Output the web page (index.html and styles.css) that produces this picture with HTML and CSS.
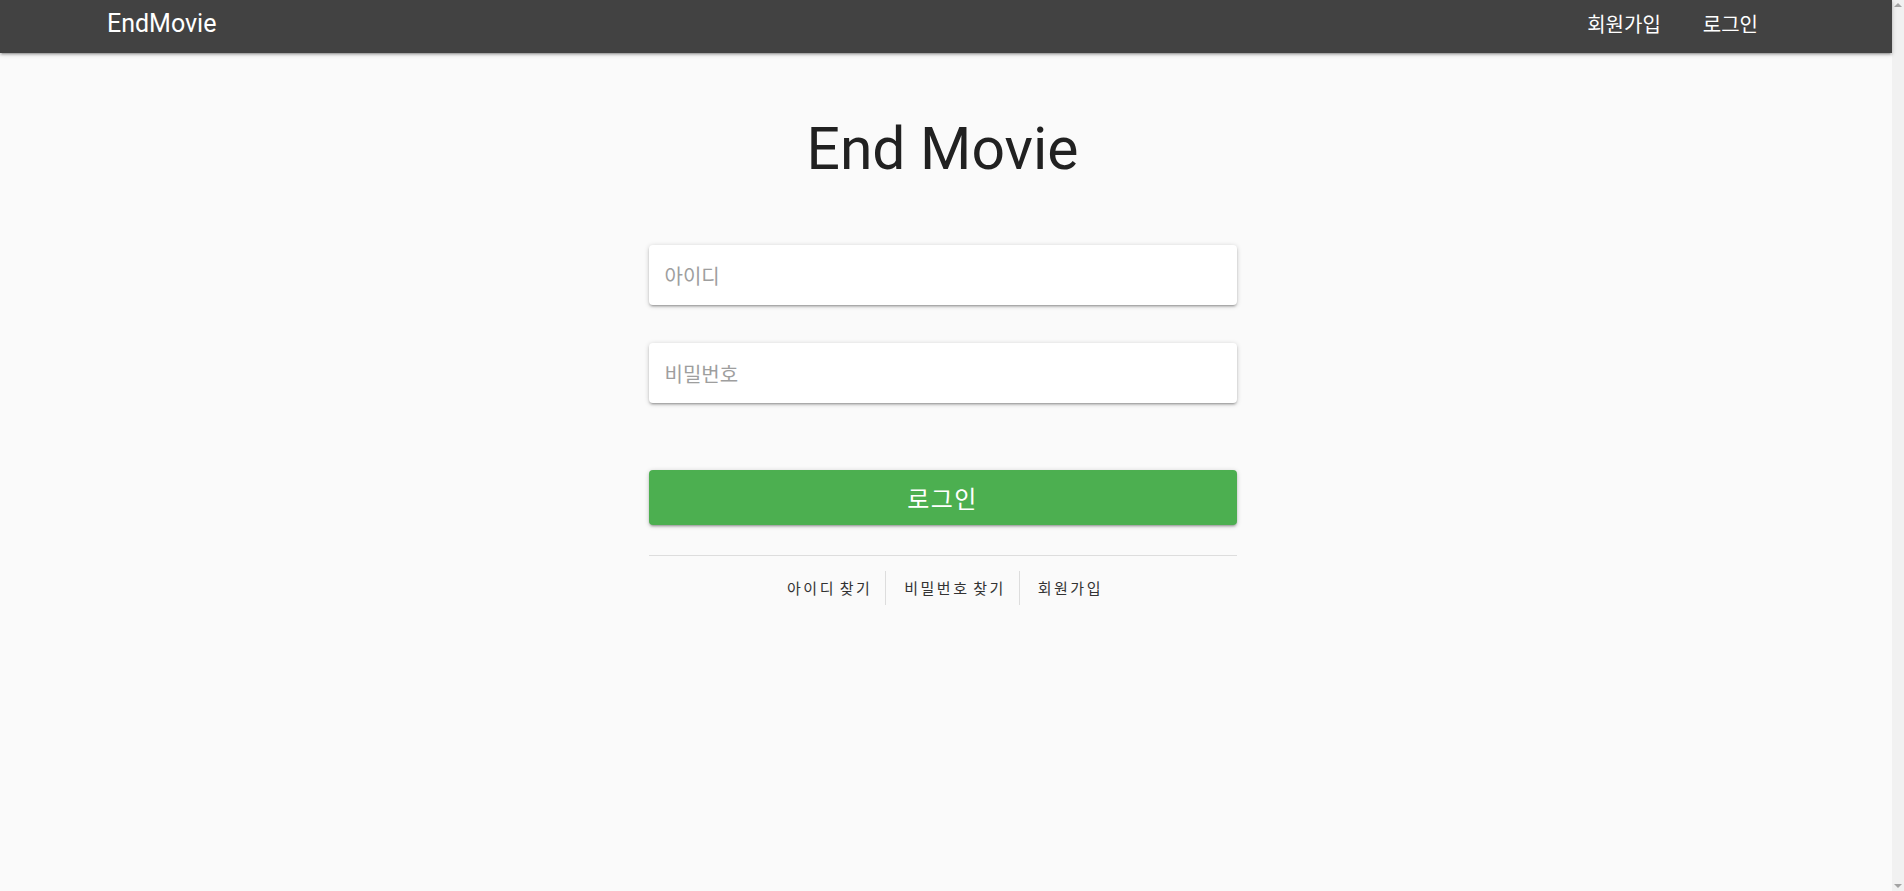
FILE: index.html
```html
<!DOCTYPE html>
<html lang="ko">
<head>
<meta charset="utf-8">
<title>EndMovie</title>
<link rel="stylesheet" href="styles.css">
</head>
<body>
<div class="app">
  <header class="topbar">
    <a class="brand" href="#">EndMovie</a>
    <nav class="topnav">
      <a href="#">회원가입</a>
      <a href="#">로그인</a>
    </nav>
  </header>
  <main class="page">
    <h1 class="title">End Movie</h1>
    <form class="login">
      <input class="field" type="text" placeholder="아이디">
      <input class="field" type="password" placeholder="비밀번호">
      <button class="submit" type="button">로그인</button>
    </form>
    <div class="divider"></div>
    <div class="links">
      <a href="#">아이디 찾기</a>
      <a href="#">비밀번호 찾기</a>
      <a href="#">회원가입</a>
    </div>
  </main>
</div>
<div class="scrollbar" aria-hidden="true">
  <span class="arrow up"></span>
  <span class="arrow down"></span>
</div>
</body>
</html>
```

FILE: styles.css
```css
html, body {
  height: 100%;
}
body {
  margin: 0;
  background: #fafafa;
  font-family: Roboto, "Noto Sans CJK KR", sans-serif;
  color: #212121;
  display: flex;
  overflow: hidden;
}
a {
  text-decoration: none;
  color: inherit;
}
.app {
  flex: 1;
  min-width: 0;
}
.scrollbar {
  width: 12px;
  flex: none;
  background: #f1f1f1;
  display: flex;
  flex-direction: column;
  justify-content: space-between;
  align-items: center;
  padding: 3px 0;
  box-sizing: border-box;
}
.arrow {
  width: 0;
  height: 0;
  border-left: 4px solid transparent;
  border-right: 4px solid transparent;
}
.arrow.up {
  border-bottom: 4px solid #a3a3a3;
}
.arrow.down {
  border-top: 4px solid #a3a3a3;
}
.topbar {
  height: 53px;
  background: #424242;
  display: flex;
  align-items: center;
  justify-content: space-between;
  padding: 0 113px 0 107px;
  box-shadow: 0 2px 2px 0 rgba(0,0,0,.14), 0 3px 1px -2px rgba(0,0,0,.12), 0 1px 5px 0 rgba(0,0,0,.2);
  position: relative;
  z-index: 1;
}
.brand {
  color: #fff;
  font-family: Roboto, sans-serif;
  font-size: 25px;
  line-height: 53px;
  margin-top: -6px;
}
.topnav {
  display: flex;
  margin-top: -6px;
}
.topnav a {
  color: #fff;
  font-family: "Noto Sans CJK KR", sans-serif;
  font-size: 20px;
  padding: 0 21px;
  line-height: 40px;
}
.page {
  width: 588px;
  margin: 0 auto;
  padding: 60px 7px 0 0;
}
.title {
  margin: 0;
  font-family: Roboto, sans-serif;
  font-weight: 400;
  font-size: 58.8px;
  line-height: 72px;
  text-align: center;
  color: #212121;
}
.login {
  margin-top: 60px;
  display: flex;
  flex-direction: column;
}
.field {
  box-sizing: border-box;
  height: 60px;
  border: none;
  border-radius: 4px;
  background: #fff;
  padding: 0 16px;
  font-family: "Noto Sans CJK KR", sans-serif;
  font-size: 20px;
  color: #333;
  outline: none;
  box-shadow: 0 2px 2px 0 rgba(0,0,0,.14), 0 3px 1px -2px rgba(0,0,0,.12), 0 1px 5px 0 rgba(0,0,0,.2);
}
.field::placeholder {
  color: #9e9e9e;
}
.field + .field {
  margin-top: 38px;
}
.submit {
  margin-top: 67px;
  height: 55px;
  border: none;
  border-radius: 4px;
  background: #4caf50;
  color: #fff;
  font-family: "Noto Sans CJK KR", sans-serif;
  font-size: 24px;
  letter-spacing: 1.5px;
  box-shadow: 0 2px 2px 0 rgba(0,0,0,.14), 0 3px 1px -2px rgba(0,0,0,.12), 0 1px 5px 0 rgba(0,0,0,.2);
}
.divider {
  margin-top: 30px;
  height: 1px;
  background: #dddddd;
}
.links {
  margin-top: 15px;
  display: flex;
  justify-content: center;
}
.links a {
  font-family: "Noto Sans CJK KR", sans-serif;
  font-size: 15px;
  letter-spacing: 2.5px;
  word-spacing: -3px;
  color: #333;
  line-height: 34px;
  padding: 0 13px 0 18px;
}
.links a + a {
  border-left: 1px solid #dddddd;
}
```
